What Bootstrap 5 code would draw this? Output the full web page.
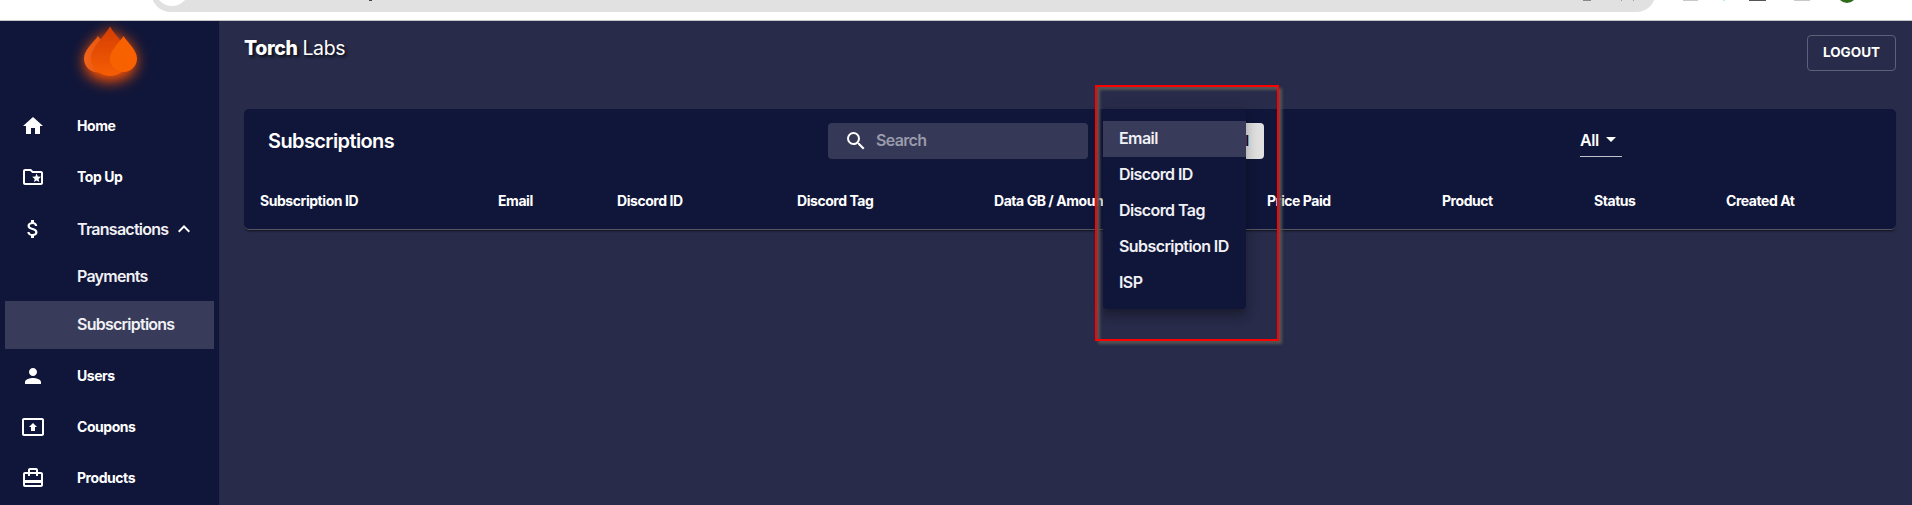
<!DOCTYPE html>
<html lang="en"><head><meta charset="utf-8"><title>Torch Labs</title>
<link href="https://cdn.jsdelivr.net/npm/bootstrap@5.3.0/dist/css/bootstrap.min.css" rel="stylesheet">
<script src="https://cdn.jsdelivr.net/npm/bootstrap@5.3.0/dist/js/bootstrap.bundle.min.js"></script>
<style>
body{font-family:Inter,sans-serif;font-size:16px;line-height:24px;color:#fff;background:#282b49;height:505px;letter-spacing:-.4px}
.chrome{height:21px;background:#fff;border-bottom:1px solid #c4c7c5}
.omni{margin-left:151px;width:1505px;height:40px;margin-top:-28px;border-radius:20px;background:#e1e1e1;padding:0 4px}
.omni-dot{width:34px;height:34px;border-radius:50%;background:#fff}
.tool{top:0;height:1px}
.avatar{top:-17px;left:1837px;width:20px;height:20px;border-radius:50%;background:#2f6b1a}
.side{width:220px;background:#101639;border-right:1px solid #24294a}
.logo-box{height:79px}
.side .nav-link{color:#fff;height:51px;padding:0;font-size:14px;font-weight:700;letter-spacing:-.45px}
.side .nav-link svg{width:24px;height:24px;margin:0 32px 0 21px;flex:none;fill:#fff}
.side .nav-link.med{font-size:16px;font-weight:600;color:#f1f1f5;letter-spacing:-.75px}
.side .nav-link.dollar{padding-top:2px}
.side .nav-link.sub{height:48px;margin:0 5px;padding-left:72px;padding-bottom:2px}
.side .nav-link.active{background:#383b59}
.side .users{margin-top:1px}
.brandrow{padding:14px 0 38px}
.brand{font-size:19.5px;line-height:27px;text-shadow:2px 2px 3px rgba(0,0,0,.7)}
.brand b{font-weight:800}
.btn-out{width:89px;height:36px;border:1px solid #5e607a;color:#fff;font-size:13.500px;font-weight:700;padding:0 0 2px;border-radius:4px}
.page{padding:0 16px 0 24px}
.panel{background:#101639;border-radius:5px;height:121px;box-shadow:0 2px 2px -1px rgba(0,0,0,.6);border-bottom:1px solid #55565f}
.panel-top{height:64px;padding-left:24px}
.ttl{width:560px;font-size:20px;font-weight:600;letter-spacing:-.6px;line-height:28px}
.srch{width:260px;height:36px;border-radius:4px;background:#353856;color:#9a9bab;font-weight:600;letter-spacing:-.65px;padding-left:16px;gap:8px}
.srch span{padding-bottom:2px}
.pick{width:140px;height:36px;margin-left:36px;border-radius:4px;background:#e0e0e0;color:#101639;font-size:14px;font-weight:700;padding:0 15px 0 0;border:0}
.allsel{width:42px;height:32px;margin-left:316px;border-bottom:1px solid #bfc1cb;font-weight:600;padding-bottom:2px}
.allsel span{border:5px solid transparent;border-top-color:#fff;border-bottom:0;margin-left:7px}
.heads{display:grid;grid-template-columns:238px 119px 180px 197px 273px 175px 152px 132px 1fr;padding:16px 0 0 16px;font-size:14px;font-weight:700;letter-spacing:-.45px}
.menu{left:1103px;top:109px;width:143px;height:200px;padding-top:12px;background:#101639;border-radius:4px;box-shadow:0 5px 5px -3px rgba(0,0,0,.2),0 8px 10px 1px rgba(0,0,0,.14),0 3px 14px 2px rgba(0,0,0,.12);font-weight:600;letter-spacing:-.58px;color:#f1f1f5;z-index:3}
.menu div{height:36px;line-height:34px;padding-left:16px}
.menu .on{background:#383b59}
.marker{left:1095px;top:85px;width:184px;height:256px;border:2px solid #f00;box-shadow:3px 3px 3px #555,inset 3px 3px 3px #555;z-index:4}
</style></head>
<body class="overflow-hidden position-relative d-flex flex-column">
<header class="chrome overflow-hidden position-relative flex-shrink-0"><div class="d-flex"><div class="omni"><div class="omni-dot"></div></div></div>
<i class="tool position-absolute" style="left:1583px;width:8px;background:#888"></i><i class="tool position-absolute" style="left:1683px;width:15px;background:#c8c8c8"></i><i class="tool position-absolute" style="left:1749px;width:17px;background:#555"></i><i class="tool position-absolute" style="left:1794px;width:16px;background:#c8c8c8"></i><i class="tool position-absolute" style="left:1621px;width:1px;background:#7ab096"></i><i class="tool position-absolute" style="left:1633px;width:1px;background:#7ab096"></i><i class="tool position-absolute" style="left:1723px;width:2px;background:#bdebf5"></i><i class="tool position-absolute" style="left:369px;width:3px;background:#444"></i>
<div class="avatar position-absolute"></div></header>
<div class="d-flex flex-grow-1 overflow-hidden">
<aside class="side flex-shrink-0"><div class="logo-box"><svg width="219" height="80" viewBox="0 0 219 80"><defs><filter id="glow" x="-60%" y="-60%" width="220%" height="220%"><feGaussianBlur stdDeviation="7"/></filter><linearGradient id="g1" x2="1"><stop stop-color="#f26519"/><stop offset="1" stop-color="#e04c07"/></linearGradient><linearGradient id="g2" x2="0" y2="1"><stop stop-color="#d43c03"/><stop offset="1" stop-color="#f65e04"/></linearGradient></defs>
<path filter="url(#glow)" fill="#ff5200" d="M110 8 120 19 124 17Q138 33 136 43C134 54 125 58 118 59Q110 62 102 59C88 58 83 45 85 36Q87 29 98 17L102 18Z"/>
<path fill="url(#g1)" d="M98 15C93 22 84 29 84 37.500A14 14 0 0 0 112 37.500C112 29 103 22 98 15Z"/><path fill="url(#g2)" d="M110 5.500C104 16 91 27 91 36.500A18.500 18 0 0 0 129 36.500C129 27 116 16 110 5.500Z"/><path fill="#f86100" d="M123.500 15C119 22 110 29 110 37.500A13.500 13.500 0 0 0 137 37.500C137 29 128 22 123.500 15Z"/></svg></div>
<nav class="nav flex-column flex-nowrap">
<a class="nav-link d-flex align-items-center"><svg viewBox="0 0 24 24"><path d="M10 20v-6h4v6h5v-8h3L12 3 2 12h3v8z"/></svg>Home</a>
<a class="nav-link d-flex align-items-center"><svg viewBox="0 0 24 24"><path d="M20 6h-8l-2-2H4c-1.100 0-2 .9-2 2v12c0 1.100.9 2 2 2h16c1.100 0 2-.9 2-2V8c0-1.100-.9-2-2-2zm0 12H4V6h5.200l2 2H20v10z"/><path d="M12.900 17l.8-3.100-2.500-2.100 3.200-.3L15.600 8.500l1.200 3 3.200.3-2.400 2.100.7 3.100-2.700-1.600z"/></svg>Top Up</a>
<a class="nav-link med dollar d-flex align-items-center"><svg viewBox="0 0 24 24"><path d="M11.800 10.900c-2.270-.59-3-1.200-3-2.150 0-1.090 1.010-1.850 2.700-1.850 1.780 0 2.440.85 2.500 2.100h2.210c-.07-1.720-1.120-3.300-3.210-3.810V3h-3v2.160c-1.940.42-3.500 1.680-3.500 3.610 0 2.310 1.910 3.460 4.700 4.130 2.500.6 3 1.480 3 2.410 0 .69-.49 1.790-2.700 1.790-2.060 0-2.870-.92-2.980-2.100h-2.200c.12 2.190 1.760 3.420 3.680 3.830V21h3v-2.150c1.950-.37 3.500-1.500 3.500-3.550 0-2.840-2.430-3.810-4.700-4.400z"/></svg><span>Transactions</span><svg class="m-0 ms-1" viewBox="0 0 24 24"><path d="m12 8-6 6 1.410 1.410L12 10.830l4.590 4.580L18 14z"/></svg></a>
<a class="nav-link med sub d-flex align-items-center">Payments</a><a class="nav-link med sub active d-flex align-items-center">Subscriptions</a>
<a class="nav-link users d-flex align-items-center"><svg viewBox="0 0 24 24"><path d="M12 12c2.210 0 4-1.790 4-4s-1.790-4-4-4-4 1.790-4 4 1.790 4 4 4zm0 2c-2.670 0-8 1.340-8 4v2h16v-2c0-2.660-5.330-4-8-4z"/></svg>Users</a>
<a class="nav-link d-flex align-items-center"><svg viewBox="0 0 24 24"><path d="M21 3H3c-1.110 0-2 .89-2 2v14c0 1.110.89 2 2 2h18c1.110 0 2-.89 2-2V5c0-1.110-.89-2-2-2zm0 16.020H3V4.980h18v14.040zM10 12H8l4-4 4 4h-2v4h-4v-4z"/></svg>Coupons</a>
<a class="nav-link d-flex align-items-center"><svg viewBox="0 0 24 24"><path d="M20 6h-3V4c0-1.110-.89-2-2-2H9c-1.110 0-2 .89-2 2v2H4c-1.110 0-2 .89-2 2v11c0 1.110.89 2 2 2h16c1.110 0 2-.89 2-2V8c0-1.110-.89-2-2-2zM9 4h6v2H9V4zm11 15H4v-2h16v2zm0-5H4V8h3v2h2V8h6v2h2V8h3v6z"/></svg>Products</a></nav></aside>
<main class="page flex-grow-1"><div class="brandrow d-flex justify-content-between"><div class="brand"><b>Torch</b> Labs</div><button class="btn btn-out">LOGOUT</button></div>
<section class="panel"><div class="panel-top d-flex align-items-center"><h1 class="ttl m-0">Subscriptions</h1><div class="srch d-flex align-items-center"><svg width="24" height="24" fill="#fff"><path d="M15.500 14h-.79l-.28-.27A6.470 6.470 0 0 0 16 9.500 6.500 6.500 0 1 0 9.500 16c1.610 0 3.090-.59 4.230-1.570l.27.28v.79l5 4.990L20.490 19zm-6 0C7.010 14 5 11.990 5 9.500S7.010 5 9.500 5 14 7.010 14 9.500 11.990 14 9.500 14z"/></svg><span>Search</span></div><button class="pick text-end">Email</button><div class="allsel d-flex align-items-center">All<span></span></div></div>
<div class="heads text-nowrap"><div>Subscription ID</div><div>Email</div><div>Discord ID</div><div>Discord Tag</div><div>Data GB / Amount</div><div>Price Paid</div><div>Product</div><div>Status</div><div>Created At</div></div></section></main></div>
<div class="menu position-absolute"><div class="on">Email</div><div>Discord ID</div><div>Discord Tag</div><div>Subscription ID</div><div>ISP</div></div>
<div class="marker position-absolute"></div>
</body></html>
